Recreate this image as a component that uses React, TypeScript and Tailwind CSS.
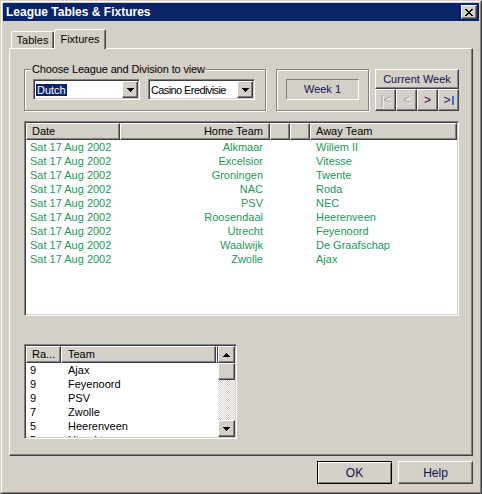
import React from 'react';

// classic 3D edges
const raised =
  'border border-t-white border-l-white border-r-[#404040] border-b-[#404040] shadow-[inset_-1px_-1px_0_#808080]';
const sunken =
  'border border-t-[#808080] border-l-[#808080] border-r-white border-b-white shadow-[inset_1px_1px_0_#404040,inset_-1px_-1px_0_#d4d0c8]';
const etched = 'border border-[#808080] shadow-[inset_1px_1px_0_#ffffff,1px_1px_0_#ffffff]';

const fixtures: [string, string][] = [
  ['Alkmaar', 'Willem II'],
  ['Excelsior', 'Vitesse'],
  ['Groningen', 'Twente'],
  ['NAC', 'Roda'],
  ['PSV', 'NEC'],
  ['Roosendaal', 'Heerenveen'],
  ['Utrecht', 'Feyenoord'],
  ['Waalwijk', 'De Graafschap'],
  ['Zwolle', 'Ajax'],
];

const standings: [string, string][] = [
  ['9', 'Ajax'],
  ['9', 'Feyenoord'],
  ['9', 'PSV'],
  ['7', 'Zwolle'],
  ['5', 'Heerenveen'],
  ['5', 'Utrecht'],
];

const Arrow: React.FC<{ up?: boolean }> = ({ up }) => (
  <svg width="7" height="4" viewBox="0 0 7 4" shapeRendering="crispEdges">
    {up ? (
      <>
        <rect x="3" y="0" width="1" height="1" fill="#000" />
        <rect x="2" y="1" width="3" height="1" fill="#000" />
        <rect x="1" y="2" width="5" height="1" fill="#000" />
        <rect x="0" y="3" width="7" height="1" fill="#000" />
      </>
    ) : (
      <>
        <rect x="0" y="0" width="7" height="1" fill="#000" />
        <rect x="1" y="1" width="5" height="1" fill="#000" />
        <rect x="2" y="2" width="3" height="1" fill="#000" />
        <rect x="3" y="3" width="1" height="1" fill="#000" />
      </>
    )}
  </svg>
);

const Combo: React.FC<{ children: React.ReactNode }> = ({ children }) => (
  <div className={`w-[107px] h-[21px] bg-white flex items-center ${sunken} p-[1px]`}>
    <div className="flex-1 pl-[1px] leading-[14px] whitespace-nowrap overflow-hidden tracking-[-0.6px]">{children}</div>
    <div className={`w-[16px] h-[17px] bg-[#d4d0c8] flex items-center justify-center ${raised}`}>
      <Arrow />
    </div>
  </div>
);

const HeaderCell: React.FC<{ className?: string; children?: React.ReactNode }> = ({ className = '', children }) => (
  <div className={`h-[17px] leading-[15px] bg-[#d4d0c8] whitespace-nowrap overflow-hidden ${raised} ${className}`}>
    {children}
  </div>
);

const App: React.FC = () => {
  return (
    <div className="w-[482px] h-[494px] bg-[#d4d0c8] border border-t-[#d4d0c8] border-l-[#d4d0c8] border-r-[#404040] border-b-[#404040] font-['Liberation_Sans',Arial,sans-serif] text-[11px] text-black">
      <div className="h-full border border-t-white border-l-white border-r-[#808080] border-b-[#808080] p-[1px]">
        {/* title bar */}
        <div className="h-[18px] bg-[#0a246a] flex items-center pl-[3px] pr-[2px]">
          <span className="flex-1 text-white font-bold text-[12px] leading-[18px]">League Tables &amp; Fixtures</span>
          <div className={`w-[16px] h-[14px] bg-[#d4d0c8] flex items-center justify-center ${raised}`}>
            <svg width="8" height="7" viewBox="0 0 8 7" shapeRendering="crispEdges">
              <path d="M0 0h2v1h-2zM6 0h2v1h-2zM1 1h2v1h-2zM5 1h2v1h-2zM2 2h4v1h-4zM3 3h2v1h-2zM2 4h4v1h-4zM1 5h2v1h-2zM5 5h2v1h-2zM0 6h2v1h-2zM6 6h2v1h-2z" fill="#000" />
            </svg>
          </div>
        </div>

        {/* tabs */}
        <div className="mt-[8px] ml-[6px] h-[19px] flex items-end pl-[2px]">
          <div className="w-[43px] h-[17px] border-t border-l border-r border-t-white border-l-white border-r-[#404040] rounded-t-[2px] shadow-[inset_-1px_0_0_#808080] flex items-center justify-center leading-[14px]">
            Tables
          </div>
          <div className="w-[52px] h-[20px] -mb-px relative z-10 bg-[#d4d0c8] border-t border-l border-r border-t-white border-l-white border-r-[#404040] rounded-t-[2px] shadow-[inset_-1px_0_0_#808080] flex items-start justify-center pt-[2px] leading-[14px]">
            Fixtures
          </div>
        </div>

        {/* tab page */}
        <div className="ml-[6px] w-[464px] h-[408px] border border-t-white border-l-white border-r-[#404040] border-b-[#404040] shadow-[inset_-1px_-1px_0_#808080] pl-[14px] pt-[20px] flex flex-col">
          <div className="flex h-[42px]">
            <div className={`relative w-[242px] h-[42px] ${etched} pl-[8px] pt-[9px] flex gap-[8px]`}>
              <span className="absolute left-[6px] -top-[8px] px-[1px] bg-[#d4d0c8] leading-[14px] whitespace-nowrap tracking-[-0.15px]">
                Choose League and Division to view
              </span>
              <Combo>
                <span className="bg-[#0a246a] text-white px-[1px] tracking-normal">Dutch</span>
              </Combo>
              <Combo>Casino Eredivisie</Combo>
            </div>

            <div className={`ml-[10px] w-[93px] h-[42px] ${etched} pl-[9px] pt-[9px]`}>
              <div className="w-[73px] h-[21px] border border-t-[#808080] border-l-[#808080] border-r-white border-b-white flex items-center justify-center text-[#10104a]">
                Week 1
              </div>
            </div>

            <div className="ml-[6px] w-[84px] flex flex-col">
              <div className={`h-[20px] ${raised} flex items-center justify-center text-[#10104a]`}>
                Current Week
              </div>
              <div className="flex h-[22px]">
                <div className={`w-[21px] ${raised} flex items-center justify-center text-[#a0a0a0] [text-shadow:1px_1px_0_#fff] text-[12px]`}>
                  |&lt;
                </div>
                <div className={`w-[21px] ${raised} flex items-center justify-center text-[#a0a0a0] [text-shadow:1px_1px_0_#fff] text-[12px]`}>
                  &lt;
                </div>
                <div className={`w-[21px] ${raised} flex items-center justify-center text-[#202050] text-[12px]`}>
                  &gt;
                </div>
                <div className={`w-[21px] ${raised} flex items-center justify-center text-[#202050] text-[12px]`}>
                  &gt;<span className="ml-[1px] w-[2px] h-[9px] bg-[#3a72c8]" />
                </div>
              </div>
            </div>
          </div>

          {/* fixtures list */}
          <div className={`mt-[10px] w-[435px] h-[195px] bg-white ${sunken} p-[1px] flex flex-col`}>
            <div className="flex">
              <HeaderCell className="w-[94px] pl-[5px]">Date</HeaderCell>
              <HeaderCell className="w-[150px] text-right pr-[6px]">Home Team</HeaderCell>
              <HeaderCell className="w-[20px]" />
              <HeaderCell className="w-[20px]" />
              <HeaderCell className="flex-1 pl-[5px]">Away Team</HeaderCell>
            </div>
            {fixtures.map(([home, away]) => (
              <div key={home} className="flex h-[14px] leading-[14px] text-[#22995a] whitespace-nowrap">
                <div className="w-[94px] pl-[4px]">Sat 17 Aug 2002</div>
                <div className="w-[150px] text-right pr-[7px]">{home}</div>
                <div className="w-[40px]" />
                <div className="flex-1 pl-[6px]">{away}</div>
              </div>
            ))}
          </div>

          {/* standings list */}
          <div className={`mt-[28px] w-[213px] h-[95px] bg-white ${sunken} p-[1px] flex`}>
            <div className="flex-1 flex flex-col overflow-hidden">
              <div className="flex">
                <HeaderCell className="w-[35px] pl-[5px]">Ra...</HeaderCell>
                <HeaderCell className="w-[155px] pl-[6px]">Team</HeaderCell>
                <HeaderCell className="flex-1" />
              </div>
              {standings.map(([pts, team]) => (
                <div key={team} className="flex h-[14px] leading-[14px] whitespace-nowrap">
                  <div className="w-[35px] pl-[4px]">{pts}</div>
                  <div className="flex-1 pl-[7px]">{team}</div>
                </div>
              ))}
            </div>
            <div className="w-[17px] flex flex-col">
              <div className={`h-[17px] bg-[#d4d0c8] ${raised} flex items-center justify-center`}>
                <Arrow up />
              </div>
              <div className={`h-[17px] bg-[#d4d0c8] ${raised}`} />
              <div className="flex-1 bg-[repeating-conic-gradient(#d4d0c8_0%_25%,#ffffff_0%_50%)] bg-[length:2px_2px]" />
              <div className={`h-[17px] bg-[#d4d0c8] ${raised} flex items-center justify-center`}>
                <Arrow />
              </div>
            </div>
          </div>
        </div>

        {/* dialog buttons */}
        <div className="mt-[5px] ml-[6px] w-[464px] flex justify-end gap-[6px]">
          <div className="w-[75px] h-[23px] border border-black shadow-[inset_1px_1px_0_#ffffff,inset_-1px_-1px_0_#808080] flex items-center justify-center text-[12px] text-[#10104a]">
            OK
          </div>
          <div className={`w-[75px] h-[23px] ${raised} flex items-center justify-center text-[12px] text-[#10104a]`}>
            Help
          </div>
        </div>
      </div>
    </div>
  );
};

export default App;
